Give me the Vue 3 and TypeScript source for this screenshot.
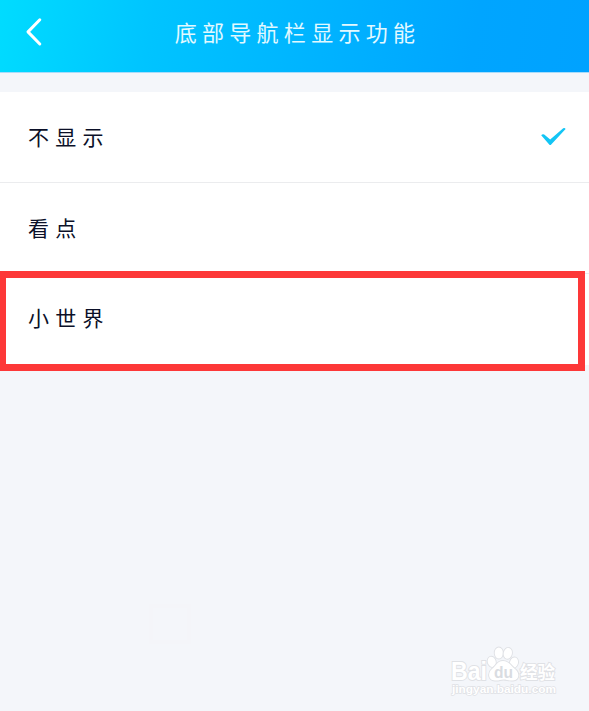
<script setup lang="ts">
import { ref } from 'vue'

const options: string[] = ['不显示', '看点', '小世界']
const selected = ref(0)
const highlighted = 2
</script>

<template>
  <div class="page">
    <header class="bar">
      <button class="back" aria-label="返回">
        <svg width="20" height="32" viewBox="0 0 20 32" fill="none">
          <path d="M15.8 3.8 4 15.9 15.8 28" stroke="#fff" stroke-width="3" stroke-linecap="round" stroke-linejoin="round" />
        </svg>
      </button>
      <h1 class="title">底部导航栏显示功能</h1>
    </header>

    <ul class="list">
      <li v-for="(name, i) in options" :key="name" class="row" @click="selected = i">
        <span class="name">{{ name }}</span>
        <svg v-if="selected === i" class="check" width="26" height="20" viewBox="0 0 26 20">
          <path d="M1.2 8.3Q2.6 6.6 4.2 7.6L10.2 12.6 23.2 1.2Q24.8.4 25.6 2L11.2 17.6Q10.2 18.6 9.2 17.6Z" fill="#13c5f5" />
        </svg>
        <div v-if="i === highlighted" class="frame"></div>
      </li>
    </ul>

    <div class="ghost"></div>

    <div class="watermark">
      <svg width="108" height="56" viewBox="0 0 108 56">
        <g class="mark">
          <text x="0" y="35" font-size="25" textLength="36" lengthAdjust="spacingAndGlyphs">Bai</text>
          <ellipse cx="40.7" cy="16.8" rx="4" ry="5.2" transform="rotate(-15 40.7 16.8)" />
          <ellipse cx="47.8" cy="8" rx="4.1" ry="5.5" />
          <ellipse cx="56.8" cy="8.3" rx="4.1" ry="5.5" transform="rotate(12 56.8 8.3)" />
          <ellipse cx="63" cy="17.6" rx="4" ry="5.2" transform="rotate(15 63 17.6)" />
          <path d="M52 16C46 16 45 21 41 24C36.5 28 37 35 44 35.5C48 36 49 34.5 52.5 34.5S58 36 62 35.5C68.5 35 69 28 64 24C60 21 58 16 52 16Z" />
          <text class="cjk" x="69" y="34" font-size="18" textLength="35" lengthAdjust="spacingAndGlyphs">经验</text>
          <text class="url" x="1" y="48" font-size="11.5" textLength="104" lengthAdjust="spacingAndGlyphs">jingyan.baidu.com</text>
        </g>
        <text class="du" x="43" y="33" font-size="16" textLength="19" lengthAdjust="spacingAndGlyphs">du</text>
      </svg>
    </div>
  </div>
</template>

<style>
body {
  margin: 0;
  background: #f4f6fa;
}
</style>

<style scoped>
.page {
  position: relative;
  box-sizing: border-box;
  height: 711px;
  overflow: hidden;
  background: #f4f6fa;
  font-family: "Liberation Sans", "Noto Sans CJK SC", sans-serif;
}

.bar {
  display: grid;
  grid-template-columns: 60px 1fr 60px;
  align-items: center;
  box-sizing: border-box;
  height: 72px;
  padding-bottom: 8px;
  background: linear-gradient(100deg, #00dcff 0%, #00c4ff 26%, #00b0ff 60%, #00a5ff 80%, #00a2ff 100%);
  box-shadow: 0 1px 0 #a9dcfa;
}

.back {
  display: flex;
  padding: 0 0 0 24px;
  border: 0;
  background: none;
}

.title {
  margin: 0;
  padding: 0 0 2px 6px;
  color: #e2f9ff;
  font-family: "Noto Sans CJK SC", sans-serif;
  font-size: 22px;
  font-weight: 400;
  line-height: 32px;
  letter-spacing: 5.3px;
  text-align: center;
  white-space: nowrap;
}

.list {
  margin: 20px 0 0;
  padding: 0;
  list-style: none;
}

.row {
  position: relative;
  display: flex;
  align-items: center;
  justify-content: space-between;
  box-sizing: border-box;
  height: 91px;
  padding: 0 23px 0 28px;
  border-bottom: 1px solid #ebecee;
  background: #fff;
}

.row:last-child {
  border-bottom: 0;
}

.name {
  padding-bottom: 3px;
  color: #0b1028;
  font-family: "Noto Sans CJK SC", sans-serif;
  font-size: 21px;
  font-weight: 400;
  line-height: 32px;
  letter-spacing: 6.2px;
}

.row:last-child .name {
  padding-bottom: 6px;
}

.check {
  display: block;
}

/* Outline laid over the last option, slightly taller than its row */
.frame {
  position: absolute;
  top: -3px;
  left: 0;
  box-sizing: border-box;
  width: 585px;
  height: 100px;
  border: 7px solid #fd3838;
  border-left-width: 6px;
  background: transparent;
}

.ghost {
  position: absolute;
  top: 604px;
  left: 149px;
  box-sizing: border-box;
  width: 42px;
  height: 40px;
  border: 4px solid #f4f5f9;
}

.watermark {
  position: absolute;
  top: 645px;
  left: 451px;
  font-weight: 700;
}

.watermark svg {
  display: block;
  overflow: visible;
}

.mark {
  fill: #fff;
  stroke: #dfe1e5;
  stroke-width: 1.8px;
  paint-order: stroke;
}

.cjk {
  font-family: "Noto Sans CJK SC", sans-serif;
}

.url {
  stroke-width: 1.4px;
}

.du {
  fill: #d9dce1;
}
</style>
